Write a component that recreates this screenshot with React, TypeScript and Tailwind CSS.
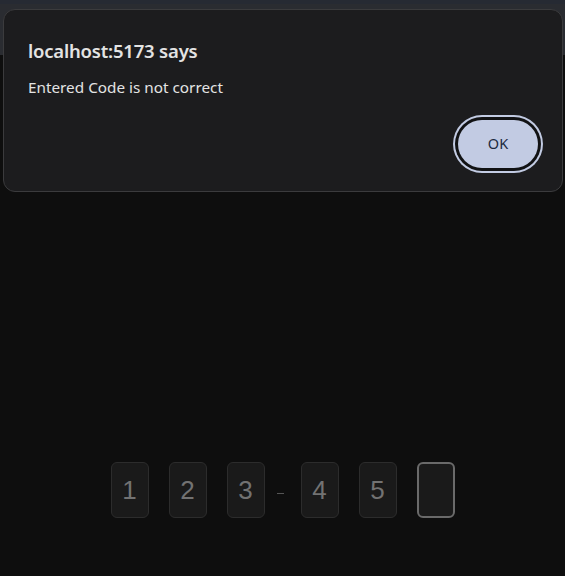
const digits = ["1", "2", "3"];
const rest = ["4", "5", ""];

function CodeBox({value, active}: {value: string; active?: boolean}) {
  return (
    <div
      className={
        active
          ? "flex h-[56px] w-[38px] items-center justify-center rounded-[6px] border-2 border-[#6a6a6a] bg-[#1a1a1a]"
          : "flex h-[56px] w-[38px] items-center justify-center rounded-[6px] border border-[#2c2c2c] bg-[#1a1a1a] text-[26px] text-[#727272]"
      }>
      {value}
    </div>
  );
}

export default function App() {
  return (
    <div
      className="relative min-h-[576px] bg-[#0e0e0e]"
      style={{fontFamily: '"Liberation Sans", Arial, sans-serif'}}>
      <div className="h-[55px] border-t-[4px] border-[#262a33] bg-[#2a2c31]" />

      <div className="flex items-center justify-center pt-[407px]">
        <div className="flex gap-5">
          {digits.map((d) => (
            <CodeBox key={d} value={d} />
          ))}
        </div>
        <span className="ml-[12px] mr-[17px] h-px w-[7px] translate-y-[3px] bg-[#555]" />
        <div className="flex gap-5">
          {rest.map((d, i) => (
            <CodeBox key={i} value={d} active={d === ""} />
          ))}
        </div>
      </div>

      <div
        className="absolute left-[3px] top-[9px] h-[183px] w-[560px] rounded-[12px] border border-[#3b3b3d] bg-[#1c1c1e] px-[24px] pt-[27px] text-[#e3e3e3]"
        style={{fontFamily: '"Noto Sans", "Open Sans", sans-serif'}}>
        <h1 className="text-[18.5px] font-semibold leading-[28px] tracking-[-0.2px]">localhost:5173 says</h1>
        <p className="mt-[12px] text-[15.3px] leading-[21px]">Entered Code is not correct</p>
        <div className="mt-[22px] flex justify-end pr-0">
          <button
            type="button"
            className="h-[48px] w-[80px] rounded-full bg-[#c2cbe3] text-[14.5px] text-[#1d2a40] shadow-[0_0_0_3px_#111214,0_0_0_5px_#c2cbe3]">
            OK
          </button>
        </div>
      </div>
    </div>
  );
}
